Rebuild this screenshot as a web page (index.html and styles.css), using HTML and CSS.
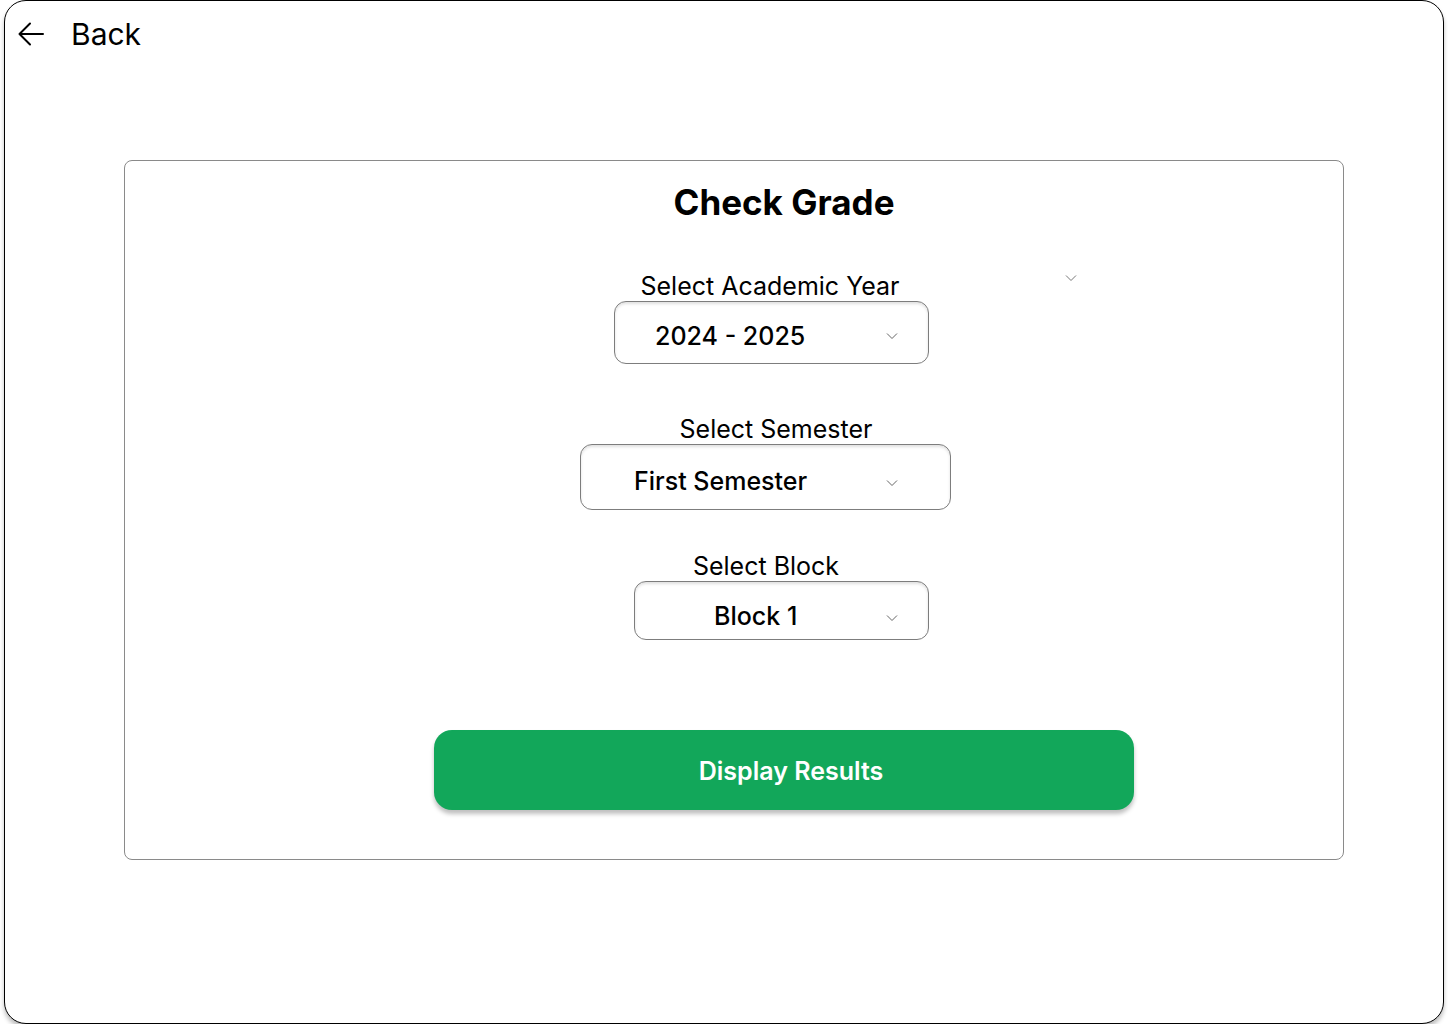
FILE: index.html
```html
<!DOCTYPE html>
<html lang="en">
<head>
<meta charset="utf-8">
<title>Check Grade</title>
<link rel="stylesheet" href="styles.css">
</head>
<body>
<div class="frame">
  <header class="topbar">
    <svg class="back-icon" viewBox="0 0 28 24" width="28" height="24" aria-hidden="true">
      <path d="M26 12H2.5 M13 1.5 L2.5 12 L13 22.5" fill="none" stroke="#000" stroke-width="2" stroke-linecap="round" stroke-linejoin="round"/>
    </svg>
    <span class="back-text">Back</span>
  </header>
  <main class="card">
    <h1 class="title">Check Grade</h1>
    <svg class="stray-chevron" viewBox="0 0 12 8" width="12" height="8" aria-hidden="true">
      <path d="M1 1.5 L6 6.5 L11 1.5" fill="none" stroke="#777" stroke-width="1"/>
    </svg>

    <label class="label label-year">Select Academic Year</label>
    <div class="select select-year">
      <span class="select-value">2024 - 2025</span>
      <svg class="chev" viewBox="0 0 12 8" width="12" height="8" aria-hidden="true"><path d="M1 1.5 L6 6.5 L11 1.5" fill="none" stroke="#666" stroke-width="1"/></svg>
    </div>

    <label class="label label-sem">Select Semester</label>
    <div class="select select-sem">
      <span class="select-value">First Semester</span>
      <svg class="chev" viewBox="0 0 12 8" width="12" height="8" aria-hidden="true"><path d="M1 1.5 L6 6.5 L11 1.5" fill="none" stroke="#666" stroke-width="1"/></svg>
    </div>

    <label class="label label-block">Select Block</label>
    <div class="select select-block">
      <span class="select-value">Block 1</span>
      <svg class="chev" viewBox="0 0 12 8" width="12" height="8" aria-hidden="true"><path d="M1 1.5 L6 6.5 L11 1.5" fill="none" stroke="#666" stroke-width="1"/></svg>
    </div>

    <button class="btn" type="button">Display Results</button>
  </main>
</div>
</body>
</html>
```

FILE: styles.css
```css
* { box-sizing: border-box; }

html, body {
  margin: 0;
  padding: 0;
  background: #fff;
}

body {
  font-family: Inter, "Noto Sans", "Liberation Sans", sans-serif;
  color: #000;
}

.frame {
  margin: 0 0 0 4px;
  width: 1440px;
  height: 1024px;
  border: 1px solid #000;
  border-radius: 22px;
  box-shadow: 0 4px 4px rgba(0, 0, 0, 0.25);
  display: flex;
  flex-direction: column;
  background: #fff;
}

.topbar {
  height: 66px;
  display: flex;
  align-items: center;
  padding-left: 12px;
}

.back-icon {
  display: block;
}

.back-text {
  margin-left: 26px;
  font-size: 30px;
  line-height: 36px;
  font-weight: 400;
}

.card {
  position: relative;
  margin: 93px 0 0 119px;
  width: 1220px;
  height: 700px;
  border: 1px solid #8a8a8a;
  border-radius: 8px;
  display: flex;
  flex-direction: column;
  align-items: flex-start;
}

.title {
  margin: 21px 0 0 0;
  width: 100%;
  padding-left: 100px;
  text-align: center;
  font-size: 35px;
  line-height: 40px;
  font-weight: 700;
}

.stray-chevron {
  position: absolute;
  left: 940px;
  top: 113px;
}

.label {
  display: block;
  font-size: 25px;
  line-height: 30px;
  font-weight: 400;
  text-align: center;
  width: 400px;
}

.label-year { margin: 49px 0 0 445px; }
.label-sem  { margin: 50px 0 0 451px; }
.label-block { margin: 41px 0 0 441px; }

.select {
  display: flex;
  align-items: center;
  border: 1px solid #7d7d7d;
  border-radius: 12px;
  box-shadow: inset 0 2px 3px rgba(0, 0, 0, 0.12);
  background: #fff;
}

.select-value {
  font-size: 25px;
  line-height: 30px;
  font-weight: 500;
  flex: 1;
}

.chev {
  display: block;
}

.select-year {
  margin-left: 489px;
  width: 315px;
  height: 63px;
  padding: 7px 30px 0 40px;
}

.select-sem {
  margin-left: 455px;
  width: 371px;
  height: 66px;
  padding: 7px 52px 0 53px;
}

.select-sem .chev,
.select-block .chev {
  margin-top: 4px;
}

.select-block {
  margin-left: 509px;
  width: 295px;
  height: 59px;
  padding: 11px 30px 0 79px;
}

.btn {
  margin: 90px 0 0 309px;
  width: 700px;
  height: 80px;
  border: none;
  border-radius: 18px;
  background: #12a75a;
  color: #fff;
  font-family: Inter, "Noto Sans", "Liberation Sans", sans-serif;
  font-size: 25px;
  font-weight: 600;
  padding: 2px 0 0 14px;
  box-shadow: 0 4px 4px rgba(0, 0, 0, 0.25);
  cursor: pointer;
}
```
